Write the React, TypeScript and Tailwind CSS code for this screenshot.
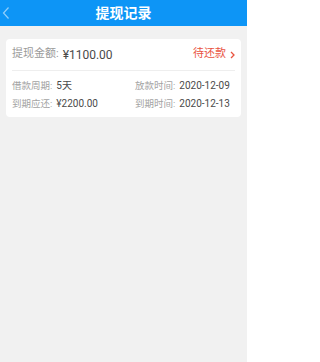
import React from 'react';

const font = { fontFamily: 'Roboto, "Noto Sans CJK SC", sans-serif' };

const Info: React.FC<{ label: string; value: string }> = ({ label, value }) => (
  <div className="flex items-center">
    <span className="text-[#a3a3a3]">{label}</span>
    <span className="ml-[4px] text-[10px] text-[#4a4a4a]">{value}</span>
  </div>
);

export default function App() {
  return (
    <div className="min-h-[362px] w-[247px] bg-[#f1f1f1]" style={font}>
      {/* header */}
      <div className="relative flex h-[26px] items-center justify-center bg-[#0d95f6]">
        <svg className="absolute left-[1px] top-[6px]" width="10" height="14" viewBox="0 0 10 14">
          <polyline points="7.5,1.5 2.5,7 7.5,12.5" fill="none" stroke="#ffffff" strokeOpacity="0.55" strokeWidth="1.2" />
        </svg>
        <h1 className="text-[14px] font-bold leading-none text-white">提现记录</h1>
      </div>

      {/* record */}
      <div className="px-[6px] pt-[13px]">
        <div className="rounded-[4px] bg-white px-[6px]">
          <div className="flex h-[32px] items-center justify-between border-b border-[#eeeeee]">
            <div className="flex items-center text-[11px]">
              <span className="text-[#9a9a9a]">提现金额:</span>
              <span className="ml-[4px] text-[12px] text-[#4a4a4a]">¥1100.00</span>
            </div>
            <div className="flex items-center text-[11px] text-[#e9533f]">
              <span>待还款</span>
              <svg className="ml-[4px]" width="5" height="8" viewBox="0 0 5 8">
                <polyline points="1,1 4,4 1,7" fill="none" stroke="#e9533f" strokeWidth="1.3" />
              </svg>
            </div>
          </div>
          <div className="grid grid-cols-[123px_1fr] pb-[4px] pt-[6px] text-[9.5px] leading-[18px]">
            <Info label="借款周期:" value="5天" />
            <Info label="放款时间:" value="2020-12-09" />
            <Info label="到期应还:" value="¥2200.00" />
            <Info label="到期时间:" value="2020-12-13" />
          </div>
        </div>
      </div>
    </div>
  );
}
